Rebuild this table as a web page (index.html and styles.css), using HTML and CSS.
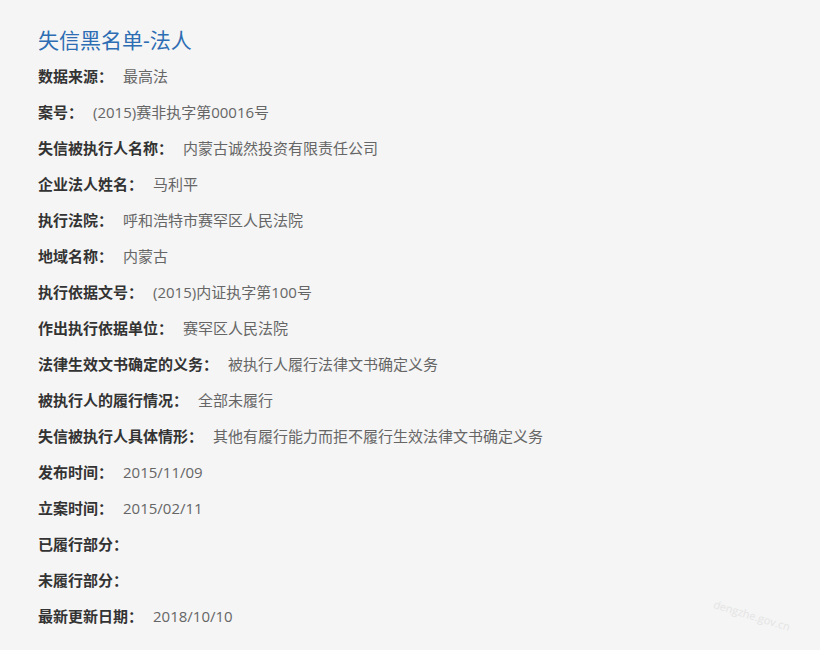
FILE: index.html
```html
<!DOCTYPE html>
<html lang="zh-CN">
<head>
  <meta charset="UTF-8">
  <meta name="viewport" content="width=device-width, initial-scale=1">
  <link rel="stylesheet" href="styles.css">
</head>
<body>

<div class="detail">
  <h2 class="title">失信黑名单-法人</h2>
  <ul class="info">
    <li><span class="label">数据来源：</span><span class="value">最高法</span></li>
    <li><span class="label">案号：</span><span class="value">(2015)赛非执字第00016号</span></li>
    <li><span class="label">失信被执行人名称：</span><span class="value">内蒙古诚然投资有限责任公司</span></li>
    <li><span class="label">企业法人姓名：</span><span class="value">马利平</span></li>
    <li><span class="label">执行法院：</span><span class="value">呼和浩特市赛罕区人民法院</span></li>
    <li><span class="label">地域名称：</span><span class="value">内蒙古</span></li>
    <li><span class="label">执行依据文号：</span><span class="value">(2015)内证执字第100号</span></li>
    <li><span class="label">作出执行依据单位：</span><span class="value">赛罕区人民法院</span></li>
    <li><span class="label">法律生效文书确定的义务：</span><span class="value">被执行人履行法律文书确定义务</span></li>
    <li><span class="label">被执行人的履行情况：</span><span class="value">全部未履行</span></li>
    <li><span class="label">失信被执行人具体情形：</span><span class="value">其他有履行能力而拒不履行生效法律文书确定义务</span></li>
    <li><span class="label">发布时间：</span><span class="value">2015/11/09</span></li>
    <li><span class="label">立案时间：</span><span class="value">2015/02/11</span></li>
    <li><span class="label">已履行部分：</span><span class="value"></span></li>
    <li><span class="label">未履行部分：</span><span class="value"></span></li>
    <li><span class="label">最新更新日期：</span><span class="value">2018/10/10</span></li>
  </ul>
</div>

<!-- site watermark -->
<div class="watermark">dengzhe.gov.cn</div>

</body>
</html>
```

FILE: styles.css
```css
html, body {
  height: 100%;
}

body {
  margin: 0;
  background: #f5f5f5;
  font-family: "Open Sans", "Noto Sans CJK SC", sans-serif;
  color: #333;
  overflow: hidden;
}

* {
  box-sizing: border-box;
}

.detail {
  padding: 22px 38px 0;
}

.title {
  margin: 0;
  font-size: 21px;
  font-weight: normal;
  line-height: 36px;
  color: #2d6db3;
}

.info {
  margin: 0;
  padding: 0;
  list-style-type: none;
}

.info li {
  line-height: 36px;
  font-size: 15px;
  white-space: nowrap;
}

.label {
  font-weight: bold;
  color: #333;
}

.value {
  margin-left: 10px;
  color: #666;
}

.watermark {
  position: absolute;
  left: 714px;
  top: 596px;
  font-size: 11px;
  color: #e4e4e4;
  transform: rotate(17deg);
  transform-origin: left center;
}
```
